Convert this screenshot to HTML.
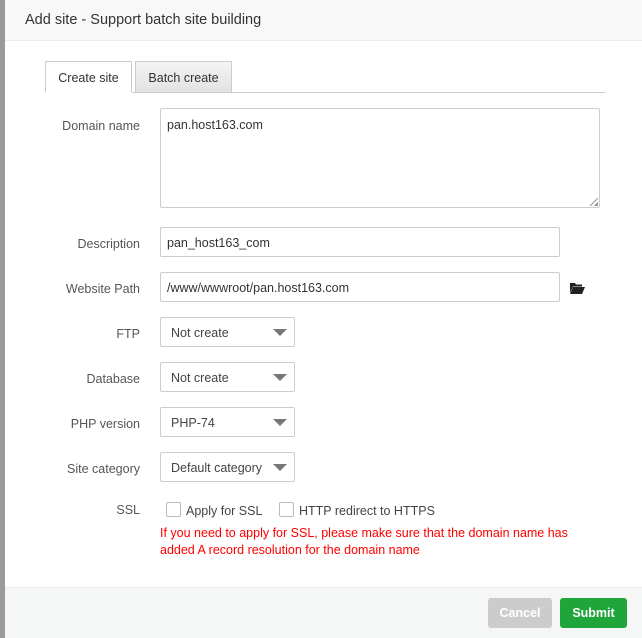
<!DOCTYPE html>
<html><head><meta charset="utf-8"><style>
*{box-sizing:border-box;margin:0;padding:0}
body{width:642px;height:638px;overflow:hidden;background:#fff;font-family:"Liberation Sans","DejaVu Sans",sans-serif;font-size:12px;color:#555;position:relative}
.a{position:absolute}
.strip{left:0;top:0;width:5px;height:638px;background:#9a9a9a}
.hd{left:5px;top:0;width:637px;height:41px;background:#f8f8f8;border-bottom:1px solid #eee}
.hd span{position:absolute;left:20px;top:12px;font-size:14.5px;color:#333}
.tab{height:32px;border:1px solid #ccc;line-height:33px;text-align:center;font-size:12.5px;color:#333}
.lbl{width:100px;left:40px;text-align:right;color:#555;font-size:12.5px}
.in{border:1px solid #ccc;border-radius:2px;padding-left:6px;color:#333;font-size:12.5px;background:#fff}
.sel{left:160px;width:135px;height:30px;border:1px solid #ccc;border-radius:2px;line-height:30px;padding-left:10px;color:#444;font-size:12.5px}
.sel:after{content:"";position:absolute;right:7px;top:11px;border-left:7px solid transparent;border-right:7px solid transparent;border-top:7px solid #777}
.cb{width:15px;height:15px;border:1px solid #bbb;border-radius:2px;background:#fff}
.btn{height:30px;top:598px;border-radius:3px;color:#fff;font-weight:bold;font-size:12.5px;text-align:center;line-height:30px}
</style></head><body>
<div class="a strip"></div>
<div class="a hd"><span>Add site - Support batch site building</span></div>
<div class="a" style="left:45px;top:92px;width:560px;height:1px;background:#ccc"></div>
<div class="a tab" style="left:45px;top:61px;width:87px;background:#fff;border-bottom-color:#fff">Create site</div>
<div class="a tab" style="left:135px;top:61px;width:97px;background:linear-gradient(#f4f4f4,#e2e2e2)">Batch create</div>

<div class="a lbl" style="top:119px">Domain name</div>
<div class="a in" style="left:160px;top:108px;width:440px;height:100px;padding-top:9px">pan.host163.com</div>
<div class="a" style="left:590px;top:198px;width:8px;height:8px;background:linear-gradient(135deg,transparent 45%,#999 45%,#999 55%,transparent 55%,transparent 75%,#999 75%)"></div>

<div class="a lbl" style="top:237px">Description</div>
<div class="a in" style="left:160px;top:227px;width:400px;height:30px;line-height:30px">pan_host163_com</div>

<div class="a lbl" style="top:282px">Website Path</div>
<div class="a in" style="left:160px;top:272px;width:400px;height:30px;line-height:30px">/www/wwwroot/pan.host163.com</div>
<svg class="a" style="left:569px;top:282px" width="16" height="12" viewBox="0 0 16 12"><path d="M1 1h5l1 1.5h6v2H4L1 11z" fill="#222"/><path d="M4 5h12l-3 7H1z" fill="#222"/></svg>

<div class="a lbl" style="top:327px">FTP</div>
<div class="a sel" style="top:317px">Not create</div>
<div class="a lbl" style="top:372px">Database</div>
<div class="a sel" style="top:362px">Not create</div>
<div class="a lbl" style="top:417px">PHP version</div>
<div class="a sel" style="top:407px">PHP-74</div>
<div class="a lbl" style="top:462px">Site category</div>
<div class="a sel" style="top:452px">Default category</div>

<div class="a lbl" style="top:503px">SSL</div>
<div class="a cb" style="left:166px;top:502px"></div>
<div class="a" style="left:186px;top:504px;font-size:12.5px;color:#444">Apply for SSL</div>
<div class="a cb" style="left:279px;top:502px"></div>
<div class="a" style="left:299px;top:504px;font-size:12.5px;color:#444">HTTP redirect to HTTPS</div>
<div class="a" style="left:160px;top:525px;width:440px;color:#f00;font-size:12.5px;line-height:17px">If you need to apply for SSL, please make sure that the domain name has added A record resolution for the domain name</div>

<div class="a" style="left:5px;top:587px;width:637px;height:51px;background:#f5f6f6;border-top:1px solid #eaeaea"></div>
<div class="a btn" style="left:488px;width:64px;background:#ccc">Cancel</div>
<div class="a btn" style="left:560px;width:67px;background:#20a53a">Submit</div>
</body></html>
